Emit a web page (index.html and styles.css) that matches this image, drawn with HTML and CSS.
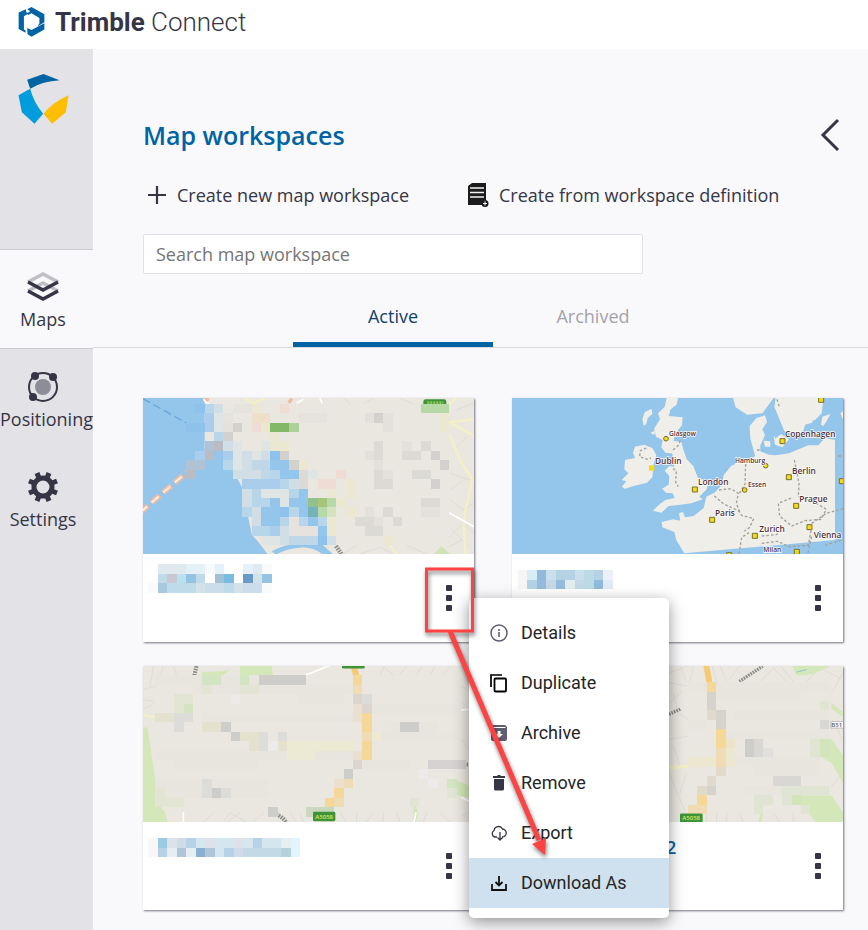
FILE: index.html
```html
<!DOCTYPE html>
<html lang="en">
<head>
<meta charset="utf-8">
<meta name="viewport" content="width=device-width, initial-scale=1">
<title>Trimble Connect</title>
<link rel="stylesheet" href="styles.css">
</head>
<body>
<header class="topbar">
  <svg class="topbar-mark" viewBox="53 20 80 91" aria-hidden="true">
    <path fill="#0063a3" d="M54 37l22-10 1 9 8 3-15 9v40l5 3v7l-21-11zM80 27l13-7 39 22v24l-21 13 6-10V53L93 39l-12 6 2-8 6-4zM80 84l13 6 39-21v19l-39 22-12-7z"/>
  </svg>
  <span class="brand"><b>Trimble</b> Connect</span>
</header>

<div class="shell">
  <aside class="sidebar">
    <svg class="sidebar-logo" viewBox="53 222 152 150" aria-hidden="true">
      <path fill="#0063a3" d="M80 239l49-17 48 19q-50 3-88 25z"/>
      <path fill="#009ddc" d="M54 286l35-20q10 40 39 75l-26 30-38-34z"/>
      <path fill="#ffbe00" d="M204 286l-8 51-41 34-26-30q28-34 75-55z"/>
    </svg>
    <nav class="nav">
      <a class="nav-item nav-item--active" href="#maps">
        <svg class="nav-icon" viewBox="0 0 32 32" aria-hidden="true">
          <g fill="none" stroke-width="3.500">
            <path stroke="#bfbfc6" d="M1 20l15-8 15 8M1 11l15-8 15 8"/>
            <path stroke="#363545" d="M1 11l15 8 15-8M1 20l15 8 15-8"/>
          </g>
        </svg>
        <span>Maps</span>
      </a>
      <a class="nav-item" href="#positioning">
        <svg class="nav-icon" viewBox="0 0 32 32" aria-hidden="true">
          <circle cx="16" cy="16" r="14" fill="none" stroke="#363545" stroke-width="2"/>
          <circle cx="16" cy="16" r="8" fill="#8d8d97"/>
          <g fill="#363545"><circle cx="8" cy="5" r="4"/><circle cx="26" cy="6" r="4"/><circle cx="6" cy="26" r="4"/></g>
        </svg>
        <span>Positioning</span>
      </a>
      <a class="nav-item" href="#settings">
        <svg class="nav-icon" viewBox="0 0 32 32" aria-hidden="true">
          <circle cx="16" cy="16" r="9" fill="none" stroke="#363545" stroke-width="5"/>
          <g fill="none" stroke="#363545" stroke-width="5">
            <path d="M10 2l2 5M22 2l-2 5M2 10l5 2M2 22l5-2M30 10l-5 2M30 22l-5-2M10 30l2-5M22 30l-2-5"/>
          </g>
        </svg>
        <span>Settings</span>
      </a>
    </nav>
  </aside>

  <main class="main">
    <div class="panel-head">
      <div class="title-row">
        <h1>Map workspaces</h1>
        <button class="collapse" type="button" aria-label="Collapse panel">
          <svg viewBox="0 0 20 34" aria-hidden="true"><path d="M18 2L3 17l15 15" fill="none" stroke="#363545" stroke-width="3"/></svg>
        </button>
      </div>
      <div class="actions">
        <button class="action" type="button">
          <svg viewBox="0 0 24 24" aria-hidden="true"><path d="M12 3v18M3 12h18" fill="none" stroke="#363545" stroke-width="2.200"/></svg>
          Create new map workspace
        </button>
        <button class="action" type="button">
          <svg viewBox="0 0 24 24" aria-hidden="true">
            <path fill="#1c1c1c" d="M5 0h14v17a4 4 0 0 0-4 5H1V3z"/>
            <path d="M3 5h14M3 9.500h14M3 14h14" stroke="#f3f3f3" stroke-width="1.700"/>
            <circle cx="18" cy="20.500" r="3.500" fill="#1c1c1c"/><path d="M16 20.500h4M18 18.500v4" stroke="#fff" stroke-width="1"/>
          </svg>
          Create from workspace definition
        </button>
      </div>
      <input class="search" type="search" placeholder="Search map workspace" aria-label="Search map workspace">
    </div>

    <div class="tabs" role="tablist">
      <button class="tab tab--active" type="button" role="tab" aria-selected="true">Active</button>
      <button class="tab" type="button" role="tab" aria-selected="false">Archived</button>
    </div>

    <div class="cards">
      <article class="card">
        <svg class="thumb" viewBox="9 24 993 468" preserveAspectRatio="xMidYMid slice" aria-hidden="true">
          <path fill="#eae7e0" d="M0 0h1010v500H0z"/>
          <path fill="#94c5eb" d="M0 20h190l4 22v141h56l29 60 28 50 28 140 28 33 22 30H0z"/>
          <path fill="#94c5eb" d="M395 484q40-24 90-22h60l35 32h-32q-20-20-60-22-50 4-80 22z"/>
          <path fill="none" stroke="#6aa5d8" stroke-width="4" stroke-dasharray="24 12" d="M9 26l130 73"/>
          <path fill="none" stroke="#f0b9a2" stroke-width="17" stroke-dasharray="32 14" d="M0 368L150 238"/>
          <path fill="none" stroke="#fbf3e2" stroke-width="6" stroke-dasharray="28 18" d="M0 368L150 238"/>
          <g fill="none" stroke="#d9d7d1" stroke-width="2">
            <path d="M610 24l20 17M700 24l-30 17M780 24l40 17M930 330l40 30 32-20M930 250l60 20M927 410l60 60M930 440l40-40 32 30M940 180l40-40M610 490l40-24M660 492l60-20 40 20M930 300l40-30M950 60l50-20M800 466l60 26M927 470l40-20"/>
          </g>
          <g fill="none" stroke="#f4f0c5" stroke-width="7">
            <path d="M927 130l38 90 32 48-22 100-4 40 5 84M1002 87l-74 10 74 40M928 44l22-20M315 26l25 14 34-16M750 468l20 24"/>
          </g>
          <path fill="none" stroke="#fff" stroke-width="5" d="M927 368l75 42M190 28l16 14M540 24l6 16M470 40l20-12"/>
          <path stroke="#f0b9a2" stroke-width="10" d="M196 24l10 8M446 38l10-12"/>
          <path stroke="#8b8b88" stroke-width="13" stroke-dasharray="5 3" d="M588 468l16 24"/>
          <path fill="#cfe3b5" d="M882 492l22-24 26 24z"/>
          <rect x="850" y="28" width="69" height="30" rx="7" fill="#3f9438"/><path stroke="#8ac65a" stroke-width="8" stroke-dasharray="6 3" d="M862 38h48"/>
          <g class="mosaic" transform="translate(137 55.6) scale(28.25)">
            <path stroke="#eae7e0" d="M4 0h24M5 1h23M4 2h24M5 3h23M5 4h23M10 5h18M11 6h17M12 7h16M13 8h15M13 9h15M16 10h12M16 11h12M15 12h13M15 13h13M16 14h12"/>
            <path stroke="#8fc2ea" d="M1 0h1M0 2h2M9 5h1M10 11h1M14 14h1"/>
            <path stroke="#b7d6ea" d="M2 0h1M3 3h1M4 6h1M9 7h1M10 8h1M7 9h1M11 9h1M7 10h2M6 11h1M11 11h1M10 12h1M12 12h1M14 12h1M7 13h2"/>
            <path stroke="#a9cdea" d="M2 1h1M2 2h1M1 5h1M4 5h1M6 8h1M9 8h1M9 13h1M7 8h2"/>
            <path stroke="#d1dee5" d="M3 0h1M4 4h1M6 5h1M8 5h1M6 6h1M5 7h3M11 8h1M6 9h1M6 10h1M7 11h1M7 12h1M10 13h1M10 14h1M15 14h1"/>
            <path stroke="#bfd7e7" d="M7 6h2M8 7h1M11 14h3"/>
            <path stroke="#dfe4e5" d="M3 1h1M3 2h1M5 4h1M8 4h1M5 5h1M7 5h1M5 6h1M8 9h3M10 10h1M13 7h1M8 14h2"/>
            <path stroke="#e6e3de" d="M4 1h1M11 12h1M11 13h3M5 0h3M12 1h3"/>
            <path stroke="#94c5eb" d="M9 6h2M10 7h2M12 9h1M9 10h1M11 10h2M8 11h2M12 11h1M8 12h2M14 13h1M13 12h1"/>
            <path stroke="#b9bcc5" d="M3 4h1M2 5h1M0 7h1"/>
            <path stroke="#b0c3d4" d="M0 6h2M2 4h1"/>
            <path stroke="#d3d1cd" d="M5 2h1M4 3h1M10 5h1M11 6h1M20 1h1M26 5h1M27 6h1M26 8h1"/>
            <path stroke="#dcdad5" d="M12 7h1M12 8h1M20 4h1M25 4h1M20 5h1M23 5h2M24 7h2M20 7h1M20 8h2M25 10h2M21 11h1M18 12h2M22 12h1M19 13h2"/>
            <path stroke="#e4e1dc" d="M19 1h1M21 1h1M21 2h1M23 4h1M19 5h1M20 6h1M21 7h1M19 11h1M20 12h1M25 11h2M4 2h1"/>
            <path stroke="#efddd5" d="M10 0h1M7 2h1M14 8h2M16 7h1"/><path stroke="#eedfcb" d="M7 1h2"/>
            <path stroke="#ebe7d1" d="M7 0h1M8 2h1M9 3h1M10 4h1M9 4h1M12 6h1M15 9h1M17 8h1M17 9h1M16 10h1M15 12h1M15 13h1M27 1h1M27 2h1M21 14h1M17 11h1"/>
            <path stroke="#82b966" d="M9 2h2"/><path stroke="#aed09c" d="M11 2h1"/>
            <path stroke="#b7d8a7" d="M25 0h3M15 10h1M14 11h1"/>
            <path stroke="#93c08f" d="M13 10h1"/><path stroke="#a5c57b" d="M14 10h1"/>
            <path stroke="#75b3b8" d="M13 11h1"/><path stroke="#d3e3bf" d="M15 11h1"/>
          </g>
        </svg>
        <div class="card-body">
          <svg class="redacted" viewBox="0 0 126 30" aria-hidden="true">
            <g class="mosaic" transform="translate(0 4) scale(9.5)">
              <path stroke="#deeaf0" d="M1 0h7M10 0h2"/><path stroke="#e5f1f8" d="M4 0h2M7 0h1M12 1h1M10 0h1"/>
              <path stroke="#bfdae9" d="M1 1h1M5 1h1M2 2h8"/><path stroke="#c9c9d2" d="M2 1h1"/>
              <path stroke="#b9e1f1" d="M3 1h1"/><path stroke="#95c4e3" d="M4 1h1M12 1h1"/>
              <path stroke="#a1bfd5" d="M7 1h1"/><path stroke="#78bde0" d="M8 1h1"/>
              <path stroke="#689bc5" d="M10 1h1"/><path stroke="#d2e2e8" d="M11 1h1M5 2h1M9 2h1"/>
              <path stroke="#a9c9e1" d="M1 2h1"/><path stroke="#cbdceb" d="M10 2h2M6 2h2"/>
              <path stroke="#f8fafb" d="M0 2h1M6 0h1M12 0h1M12 2h1"/>
            </g>
          </svg>
          <button class="more" type="button" aria-label="Workspace actions"><i></i><i></i><i></i></button>
        </div>

        <div class="menu" role="menu">
          <button class="menu-item" type="button" role="menuitem">
            <svg viewBox="0 0 20 20" aria-hidden="true"><circle cx="10" cy="10" r="8" fill="none" stroke="#5f5e70" stroke-width="1.5"/><path d="M10 9v5M10 6v2" stroke="#5f5e70" stroke-width="1.6"/></svg>
            Details
          </button>
          <button class="menu-item" type="button" role="menuitem">
            <svg viewBox="0 0 20 20" aria-hidden="true"><path d="M2 14V2h11" fill="none" stroke="#000" stroke-width="1.7"/><rect x="5.5" y="5.5" width="11.5" height="13" rx="1" fill="none" stroke="#000" stroke-width="1.8"/></svg>
            Duplicate
          </button>
          <button class="menu-item" type="button" role="menuitem">
            <svg viewBox="0 0 20 20" aria-hidden="true"><path fill="#5f5e70" d="M4 2h12l2 2v12q0 2-2 2H4q-2 0-2-2V4z"/><path stroke="#fff" stroke-width="1" d="M3.500 4.500h13"/><path fill="#fff" d="M8.500 8h3v3H14l-4 4-4-4h2.500z"/></svg>
            Archive
          </button>
          <button class="menu-item" type="button" role="menuitem">
            <svg viewBox="0 0 20 20" aria-hidden="true"><path fill="#363545" d="M4 3h4l1-1h2l1 1h4v2H4zM5 6h10v10q0 1.500-1.500 1.500h-7Q5 17.500 5 16z"/></svg>
            Remove
          </button>
          <button class="menu-item" type="button" role="menuitem">
            <svg viewBox="0 0 20 20" aria-hidden="true"><path d="M8 14H6a3.500 3.500 0 0 1-1-6.500A4.500 4.500 0 0 1 13.500 6 4 4 0 0 1 13 14M11 9v8M8.500 14.500L11 17l2.500-2.500" fill="none" stroke="#363545" stroke-width="1.300"/></svg>
            Export
          </button>
          <button class="menu-item menu-item--active" type="button" role="menuitem">
            <svg viewBox="0 0 20 20" aria-hidden="true"><path d="M3 11v6h14v-6M10 3v9M6.500 9l3.500 3.500L13.500 9" fill="none" stroke="#111" stroke-width="1.800"/></svg>
            Download As
          </button>
        </div>

        <svg class="pointer" viewBox="0 0 130 300" aria-hidden="true">
          <path d="M28 66l89 209" stroke="#ff4343" stroke-width="5" fill="none"/>
          <path fill="#ff4343" d="M110 279l14-6-1 17z"/>
          <rect x="4.500" y="4" width="46" height="62" fill="none" stroke="#ff4343" stroke-width="3"/>
        </svg>
      </article>

      <article class="card">
        <svg class="thumb" viewBox="21 24 993 468" preserveAspectRatio="xMidYMid slice" aria-hidden="true">
          <path fill="#94c5eb" d="M0 0h1040v500H0z"/>
          <g fill="#f0eee8">
            <path d="M485 24h34l-4 20-18 14-6 20 42 4-2 24-18 22-8 24 24 4 6 22 10 30 20 20 14 36 32 10-6 24-22 22 10 8-34 12-44 6-24 2-22 20-26-6 22-20 16-12 28-6-6-14-20-2-12-12 20-12 2-26-14-16 14-14 14 2 2-14-8-26-20-2-12-16 4-22-20-10-6-24 18-28-6-18 20-20z"/>
            <path d="M416 108l-4-22 8-20 20-10 2 16-14 12-4 18zM436 128l14-6-2 14z"/>
            <path d="M390 170l28-6 24 10 12 22-8 26-4 40-16 16-40 10-26 8-10-6 14-16-14-4 20-20-12-12 2-28 30-6-6-16z"/>
            <path d="M538 490l-24-40-6-24-36-14-2-16 34-8 22 4-4-22 12-4 6 16 26-4 30-24 8-34 24-12 22-22 6-30 22-28 20-10 32-2 20-18-6-24-8-28-2-38 20-24 26-8 6 20-14 22 8 18-14 30 0 18 26 10 20 2 40-6 58-24 30 0 20-22 30 6v300z"/>
            <path d="M680 24h130l16 20 6 26 16 36 12 22 20 6 16-14 6-22 28-8 20-20 6-46h60v-4H680zM684 24l8 28 34 22 46-4 34-46zM812 24l-4 26 30 74 34 14 14-30 36-10 6-74z"/>
            <path d="M806 140l22-8 24 16-20 24-22-8zM776 152l20 2 0 16-16 0zM948 104l4-24 24-8-14 26-8 10zM1006 70l10-8v30z"/>
          </g>
          <path fill="#94c5eb" d="M806 50l16 60 14 16-26 20-8-60-10-14z"/>
          <g fill="none" stroke="#a3a19c" stroke-width="4" stroke-dasharray="8 6">
            <path d="M424 174l-18 8-2 18 22 8 12-4M526 152l-6 14-16 14M504 236l10 6-2 34 8 14M628 318l28 24 44 20 10 14 36 10-12 26-16 12M642 300l36-4 22 14-6 30 12 30M722 222l-2 60-18 30M868 210l14 70-2 40 40 12 44 26-16 30-48 4-40 16-36-30-4-38 40-16M756 180l16 0M1000 198h14M816 28l8 26M770 438l44-4 24-20M770 460l50-6 30 16 60-4 8-46M920 400l44-30 50-14M702 492l8-50 22-14M920 440l-12 52M960 466l50-16"/>
          </g>
          <g fill="#f5da19" stroke="#77702a" stroke-width="3">
            <circle cx="483" cy="146" r="7"/><path stroke="none" d="M432 226h16v16h-16z"/><path d="M562 291h15v15h-15zM614 382h15v15h-15zM742 430h15v15h-15zM866 340h15v15h-15zM906 404h15v15h-15zM844 254h15v15h-15zM825 146h15v15h-15zM941 22h15v15h-15zM868 478h15v15h-15zM1003 266h15v15h-15zM665 488h15v15h-15z"/><circle cx="719" cy="300" r="7"/><circle cx="782" cy="227" r="7"/>
          </g>
          <g class="map-labels">
            <text x="840" y="142">Copenhagen</text><text x="450" y="221">Dublin</text><text x="579" y="286">London</text><text x="861" y="251">Berlin</text><text x="883" y="336">Prague</text><text x="630" y="378">Paris</text><text x="763" y="427">Zurich</text><text x="926" y="443">Vienna</text>
            <g class="map-labels--small"><text x="492" y="137">Glasgow</text><text x="690" y="218">Hamburg</text><text x="729" y="292">Essen</text><text x="775" y="486">Milan</text></g>
          </g>
        </svg>
        <div class="card-body">
          <svg class="redacted" viewBox="0 0 126 30" aria-hidden="true">
            <g class="mosaic" transform="translate(0 5) scale(9.5)">
              <path stroke="#f7f4f6" d="M-1 .5h1M-1 1.500h1"/>
              <path stroke="#d7edf6" d="M0 .5h1"/><path stroke="#90bad9" d="M1 .5h1M7 1.500h1"/>
              <path stroke="#cadeec" d="M2 .5h1M5 .5h1"/><path stroke="#b3d2e4" d="M3 .5h2M7 .5h1M0 1.500h1"/>
              <path stroke="#bbdae5" d="M6 .5h1M6 1.500h1"/><path stroke="#97bbdc" d="M1 1.500h1M3 1.500h1"/>
              <path stroke="#c5d8e6" d="M2 1.500h1M5 1.500h1"/><path stroke="#e2eeee" d="M4 1.500h1"/>
              <path stroke="#ebf0f9" d="M8 .5h1"/><path stroke="#dfebf5" d="M8 1.500h1"/>
            </g>
          </svg>
          <button class="more" type="button" aria-label="Workspace actions"><i></i><i></i><i></i></button>
        </div>
      </article>

      <article class="card">
        <svg class="thumb" viewBox="9 18 993 471" preserveAspectRatio="xMidYMid slice" aria-hidden="true">
          <path fill="#eae7e0" d="M0 0h1010v500H0z"/>
          <g fill="none" stroke="#d9d7d1" stroke-width="2">
            <path d="M9 90l40-10M40 20l-10 60M60 50l10-30M100 18l10 30M9 120l36 6M9 150l36-20M220 460l-30 28M250 488l20-28 50 28M300 460l-40 28M370 460l-30 28M450 460l20 28M480 460l10 28M600 460l20 28M650 460v28M700 460l-20 28M730 460v28M770 460l10 28M860 460l-10 28M900 460l30 28M720 48l12-26 30 26M780 44l20-24M830 46l14-24M870 46l16-26M910 46l20-26M965 80l30 20M965 130l36 30M965 240l36 50M990 350l12-80M965 470l36-20"/>
          </g>
          <g fill="#d3e7b9"><path d="M9 204h14l22 154v60l30 40 8 30H9zM300 18h95l4 30-42 28h-55zM186 38l84-5-28 18v25h-56zM950 362l52 22v36l-52-14zM820 420l14 40-6 28h-8z"/></g>
          <path fill="none" stroke="#fff" stroke-width="5" d="M496 47l80-32M130 458v31M828 458l-6 31M964 414l38 18M964 152l38-4"/>
          <path fill="none" stroke="#f3efc6" stroke-width="7" d="M9 166l36 8M524 488h28"/>
          <path stroke="#f5ca73" stroke-width="18" d="M641 20l8 30"/>
          <path stroke="#8b8b88" stroke-width="12" stroke-dasharray="5 3" fill="none" d="M163 48l7-30M386 456q36 8 54 34M964 315h20"/>
          <g class="mosaic" transform="translate(17.500 61.500) scale(28.250)">
            <path stroke="#e8e5de" d="M1 0h11M5 1h17M6 4h16M1 8h22M3 9h9M1 11h12M2 12h11M23 3h10M24 6h9M23 9h5M16 2h5M26 5h5"/>
            <path stroke="#e2e5d3" d="M3 2h2M3 3h1M6 1h1M10 1h2M1 12h1M1 13h3M28 13h1M32 12h1"/>
            <path stroke="#d2e4c1" d="M4 3h1M6 0h2M10 0h1M32 11h1"/>
            <path stroke="#dcdcd9" d="M3 4h1M3 5h1M6 11h1M6 12h1M12 7h1M14 6h1M12 6h1M8 12h1M23 2h1M4 4h1"/>
            <path stroke="#cdcdca" d="M12 0h5M8 5h1M9 6h1M7 12h1M13 14h1M21 10h1M27 5h2"/>
            <path stroke="#e4e1ce" d="M1 4h2M6 5h1M10 6h2M11 7h1M14 7h1M7 5h1"/>
            <path stroke="#ecead2" d="M15 7h7M15 8h3M24 6h1"/>
            <path stroke="#f5d798" d="M22 0h1M23 4h1M23 5h1M23 7h1M23 8h1M20 12h1M19 13h1"/>
            <path stroke="#efdcb5" d="M22 1h1M23 6h1M21 11h1M20 13h1"/>
            <path stroke="#ebdfcf" d="M22 3h1M22 4h1M22 8h1M20 11h1"/>
            <path stroke="#dcd5cd" d="M22 2h1M23 3h1M22 9h1"/>
            <path stroke="#d6d2d2" d="M30 9h4"/><path stroke="#ecebea" d="M29 10h1M30 11h1M9 2h1M13 7h1"/>
            <path stroke="#cad8bd" d="M17 14h3"/>
          </g>
          <rect x="519" y="457" width="67" height="28" rx="4" fill="#3f9438"/><text class="road" x="526" y="478">A5058</text>
          <rect x="606" y="2" width="68" height="25" rx="4" fill="#3f9438"/>
        </svg>
        <div class="card-body">
          <svg class="redacted redacted--wide" viewBox="0 0 160 30" aria-hidden="true">
            <g class="mosaic" transform="translate(0 5) scale(9.5)">
              <path stroke="#f8f6f7" d="M0 .5h1M0 1.500h1"/><path stroke="#9acbe3" d="M1 .5h1"/><path stroke="#dce1ea" d="M2 .5h1M6 .5h1M9 .5h1"/>
              <path stroke="#cfdbe8" d="M3 .5h1M9 1.500h1"/><path stroke="#b7d2e7" d="M4 .5h1M11 .5h1M1 1.500h1M8 1.500h1"/>
              <path stroke="#d6e6ee" d="M5 .5h1M7 .5h2M10 .5h1M12 .5h2M7 1.500h1"/><path stroke="#e5eef0" d="M14 .5h1M2 1.500h1M4 1.500h1"/>
              <path stroke="#b0c5d9" d="M3 1.500h1M6 1.500h1"/><path stroke="#8ab2d0" d="M5 1.500h1"/>
              <path stroke="#c3dae6" d="M10 1.500h4"/><path stroke="#b6d0dc" d="M14 1.500h1"/><path stroke="#e2f4fd" d="M15 .5h1M15 1.500h1"/>
            </g>
          </svg>
          <button class="more" type="button" aria-label="Workspace actions"><i></i><i></i><i></i></button>
        </div>
      </article>

      <article class="card">
        <svg class="thumb" viewBox="-444 318 993 471" preserveAspectRatio="xMidYMid slice" aria-hidden="true">
          <path fill="#eae7e0" d="M-460 300h1030v500H-460z"/>
          <g fill="none" stroke="#d9d7d1" stroke-width="2">
            <path d="M27 340l60-22M27 370l56 10M40 400l14 60 30 20M27 430l40-34M60 318l20 50M100 318l-10 50M170 368l-14-50M200 366l-20-48M240 318l-30 40M300 366l40-40 40 40M360 318l40 48M440 366l40-40 60 30M515 400l34-60M515 480l34 60M27 540l56-10M40 560l20 60M27 640l50 120M60 700l20-60M140 760v29M170 760v29M200 760v29M240 760l10 29M340 760l20 29M400 760v29M515 680l34-40"/>
          </g>
          <g fill="#d3e7b9"><path d="M396 318h120l-60 26-46 4zM514 430l35 28v14l-35-24zM480 538h34l35 50v82l-35-60-34-20zM396 708h118l35 50v31h-80l-46-52-27-4z"/></g>
          <path fill="none" stroke="#d3e7b9" stroke-width="8" d="M306 758l-6 31"/>
          <path fill="none" stroke="#f5ca73" stroke-width="18" d="M139 318l9 50"/>
          <path fill="none" stroke="#f3efc6" stroke-width="10" d="M27 624l57-4"/>
          <path fill="none" stroke="#8ec6d6" stroke-width="3" d="M410 338l30-8"/>
          <path fill="none" stroke="#8b8b88" stroke-width="10" stroke-dasharray="5 3" d="M238 366l70-46M27 464l36-16"/>
          <g class="mosaic" transform="translate(84 382) scale(28.250)">
            <path stroke="#e8e5de" d="M0 0h15M3 1h9M5 3h10M4 5h11M5 8h9M7 9h7M0 4h2M6 11h8"/>
            <path stroke="#f5d798" d="M2 0h1M3 5h1M3 6h1M1 12h1"/><path stroke="#efdcb5" d="M3 7h1M3 8h1M0 13h2"/>
            <path stroke="#d6d2cc" d="M2 1h1M2 2h1M3 3h1M3 4h1M2 11h1"/><path stroke="#e1d9c9" d="M2 3h1M3 9h1M2 10h1M1 11h1"/>
            <path stroke="#ebe7d1" d="M0 8h3M4 7h1M4 8h1"/><path stroke="#ede2ca" d="M4 6h1"/>
            <path stroke="#cdcdca" d="M6 6h1M6 7h1"/><path stroke="#d8d7d4" d="M7 6h1M7 7h1M9 10h3M14 4h1"/><path stroke="#e0dfdb" d="M8 7h1"/>
            <path stroke="#dfe5d2" d="M14 2h1M13 6h1M13 7h1M10 11h5M7 12h2M10 12h1M12 13h1M7 13h1"/>
            <path stroke="#d3e4bd" d="M14 6h1M14 7h1M11 12h1"/>
          </g>
          <path fill="#f7f7f4" stroke="#aaa" stroke-width="2" d="M513 486h40v20h-40z"/>
          <text class="road road--plain" x="514" y="502">B51</text>
          <rect x="60" y="762" width="68" height="27" rx="4" fill="#3f9438"/><text class="road" x="67" y="782">A5058</text>
        </svg>
        <div class="card-body">
          <h2 class="card-title">2</h2>
          <button class="more" type="button" aria-label="Workspace actions"><i></i><i></i><i></i></button>
        </div>
      </article>
    </div>
  </main>
</div>
</body>
</html>
```
FILE: styles.css
```css
*,
*::before,
*::after {
  box-sizing: border-box;
}

:root {
  --ink: #363545;
  --blue: #0063a3;
  --page: #f9f9fb;
  --rail: #e2e2e7;
}

body {
  margin: 0;
  min-height: 100vh;
  display: flex;
  flex-direction: column;
  background: var(--page);
  color: var(--ink);
  font-family: "Open Sans", "Noto Sans", sans-serif;
  font-size: 18px;
  line-height: 24px;
}

button,
input {
  font: inherit;
  color: inherit;
}

button {
  padding: 0;
  border: 0;
  background: none;
  cursor: pointer;
}

.topbar {
  height: 49px;
  padding: 0 18px 5px;
  display: flex;
  align-items: center;
  gap: 10px;
  background: #fff;
}

.topbar-mark {
  width: 27px;
  height: 30px;
}

.brand {
  font-family: Roboto, sans-serif;
  font-size: 26px;
  font-weight: 300;
  line-height: 32px;
}

.brand b {
  font-weight: 700;
}

.shell {
  flex: 1;
  display: flex;
}

.sidebar {
  flex: none;
  width: 93px;
  background: var(--rail);
}

.sidebar-logo {
  display: block;
  width: 51px;
  height: 50px;
  margin: 25px 18px 125px;
}

.nav-item {
  height: 100px;
  padding: 21px 7px 0 0;
  display: flex;
  flex-direction: column;
  align-items: safe center;
  gap: 4px;
  border: solid transparent;
  border-width: 1px 0;
  color: var(--ink);
  text-decoration: none;
  white-space: nowrap;
}

.nav-item--active {
  background: var(--page);
  border-color: #cbcbd2;
}

.nav-icon {
  width: 32px;
  height: 32px;
}

.main {
  flex: 1;
  min-width: 0;
}

.panel-head {
  padding: 65px 25px 18px 50px;
  display: flex;
  flex-direction: column;
  gap: 20px;
}

.title-row {
  height: 42px;
  display: flex;
  align-items: center;
  justify-content: space-between;
}

h1 {
  margin: 0;
  color: var(--blue);
  font-size: 25px;
  font-weight: 600;
  line-height: 32px;
}

.collapse {
  padding: 0 3px;
}

.collapse svg {
  display: block;
  width: 20px;
  height: 34px;
}

.actions {
  display: flex;
}

.action {
  height: 38px;
  min-width: 322px;
  padding: 0 2px;
  display: flex;
  align-items: center;
  gap: 8px;
  white-space: nowrap;
}

.action svg {
  width: 24px;
  height: 24px;
}

.search {
  width: 100%;
  max-width: 500px;
  height: 40px;
  padding: 0 12px;
  border: 1px solid #e0e1e9;
  border-radius: 2px;
  background: #fff;
}

.search::placeholder {
  color: #757575;
  opacity: 1;
}

.tabs {
  padding: 0 25px 0 50px;
  display: flex;
  justify-content: center;
  border-bottom: 1px solid #d9d9df;
}

.tab {
  width: 200px;
  height: 55px;
  padding-bottom: 2px;
  border-bottom: 5px solid transparent;
  color: #a3a3ab;
}

.tab--active {
  border-color: var(--blue);
  color: #0e416c;
}

.cards {
  padding: 50px 25px 20px 50px;
  display: grid;
  grid-template-columns: 1fr 1fr;
  gap: 24px 38px;
}

.card {
  position: relative;
  min-width: 0;
  background: #fff;
  box-shadow: 1px 1px 2px #737380;
}

.thumb {
  display: block;
  width: 100%;
  height: 156px;
}

.mosaic {
  stroke-width: 1;
  shape-rendering: crispEdges;
}

.map-labels {
  fill: #512f38;
  stroke: #fff;
  stroke-width: 4px;
  paint-order: stroke;
  font-size: 25px;
  font-weight: 600;
}

.map-labels--small {
  font-size: 20px;
}

.road {
  fill: #d7e86a;
  font-size: 18px;
  font-weight: 600;
}

.road--plain {
  fill: #666;
}

.card-body {
  height: 88px;
  padding: 11px 19px 0 5px;
  display: flex;
  align-items: flex-start;
  justify-content: space-between;
}

.redacted {
  width: 126px;
  height: 30px;
  margin-left: 10px;
  overflow: visible;
}

.card:first-child .redacted,
.redacted--wide {
  margin-left: 0;
}

.redacted--wide {
  width: 160px;
}

.card-title {
  margin: 2px 0 0 149px;
  color: var(--blue);
  font-size: 18px;
  font-weight: 600;
  line-height: 24px;
}

.more {
  width: 12px;
  height: 66px;
  display: flex;
  flex-direction: column;
  align-items: center;
  justify-content: center;
  gap: 4px;
}

.more i {
  width: 6px;
  height: 6px;
  background: var(--ink);
  border-radius: 1px;
}

.menu {
  position: absolute;
  z-index: 2;
  top: 200px;
  left: calc(100% - 5px);
  width: 200px;
  padding: 10px 0;
  border-radius: 5px;
  background: #fff;
  box-shadow: 0 4px 16px #0000006b;
}

.menu-item {
  width: 100%;
  height: 50px;
  padding: 0 20px;
  display: flex;
  align-items: center;
  gap: 12px;
  color: #252526;
  font-family: Roboto, sans-serif;
  font-size: 18px;
  text-align: left;
}

.menu-item svg {
  width: 20px;
  height: 20px;
}

.menu-item--active {
  background: #cfe1ef;
}

.pointer {
  position: absolute;
  z-index: 3;
  top: 167px;
  left: calc(100% - 52px);
  width: 130px;
  height: 300px;
  overflow: visible;
  pointer-events: none;
  filter: drop-shadow(1px 3px 2px #00000080);
}
```
